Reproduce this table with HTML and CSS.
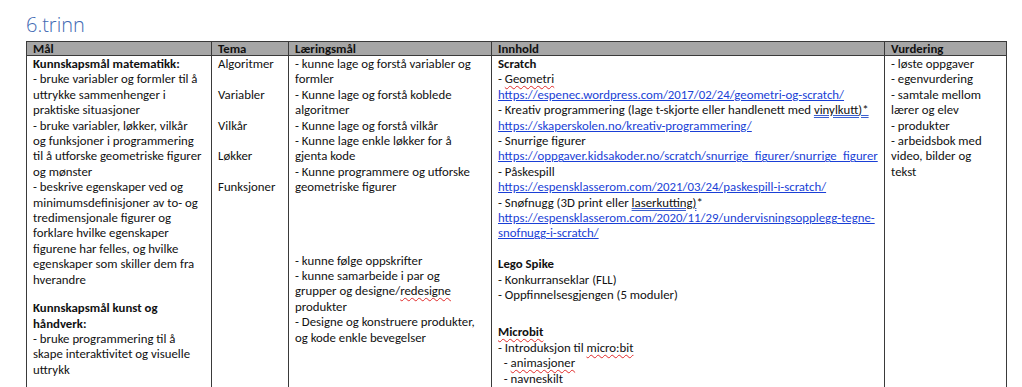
FILE: index.html
```html
<!DOCTYPE html>
<html lang="no">
<head>
<meta charset="utf-8">
<title>6.trinn</title>
<link rel="stylesheet" href="styles.css">
</head>
<body>
<div class="page">
  <h2 class="title">6.trinn</h2>
  <table class="plan">
    <colgroup>
      <col class="c-mal">
      <col class="c-tema">
      <col class="c-lar">
      <col class="c-inn">
      <col class="c-vur">
    </colgroup>
    <thead>
      <tr>
        <th>Mål</th>
        <th>Tema</th>
        <th>Læringsmål</th>
        <th>Innhold</th>
        <th>Vurdering</th>
      </tr>
    </thead>
    <tbody>
      <tr>
        <td>
          <p><b>Kunnskapsmål matematikk:</b><br>- bruke variabler og formler til å<br>uttrykke sammenhenger i<br>praktiske situasjoner<br>- bruke variabler, løkker, vilkår<br>og funksjoner i programmering<br>til å utforske geometriske figurer<br>og mønster<br>- beskrive egenskaper ved og<br>minimumsdefinisjoner av to- og<br>tredimensjonale figurer og<br>forklare hvilke egenskaper<br>figurene har felles, og hvilke<br>egenskaper som skiller dem fra<br>hverandre</p>
          <p class="gap gap-s"></p>
          <p><b>Kunnskapsmål kunst og<br>håndverk:</b><br>- bruke programmering til å<br>skape interaktivitet og visuelle<br>uttrykk</p>
        </td>
        <td>
          <p>Algoritmer</p>
          <p class="gap"></p>
          <p>Variabler</p>
          <p class="gap"></p>
          <p>Vilkår</p>
          <p class="gap"></p>
          <p>Løkker</p>
          <p class="gap"></p>
          <p>Funksjoner</p>
        </td>
        <td>
          <p>- kunne lage og forstå variabler og<br>formler<br>- Kunne lage og forstå koblede<br>algoritmer<br>- Kunne lage og forstå vilkår<br>- Kunne lage enkle løkker for å<br>gjenta kode<br>- Kunne programmere og utforske<br>geometriske figurer</p>
          <p class="gap gap-l"></p>
          <p>- kunne følge oppskrifter<br>- kunne samarbeide i par og<br>grupper og designe/<span class="spell">redesigne</span><br>produkter<br>- Designe og konstruere produkter,<br>og kode enkle bevegelser</p>
        </td>
        <td>
          <p><b>Scratch</b><br>- <span class="spell">Geometri</span><br><a href="#">https://espenec.wordpress.com/2017/02/24/geometri-og-scratch/</a><br>- Kreativ programmering (lage t-skjorte eller handlenett med <span class="gram">vinylkutt)*</span><br><a href="#">https://skaperskolen.no/kreativ-programmering/</a><br>- Snurrige figurer<br><a href="#">https://oppgaver.kidsakoder.no/scratch/snurrige_figurer/snurrige_figurer</a><br>- Påskespill<br><a href="#">https://espensklasserom.com/2021/03/24/paskespill-i-scratch/</a><br>- Snøfnugg (3D print eller <span class="gram">laserkutting)</span>*<br><a href="#">https://espensklasserom.com/2020/11/29/undervisningsopplegg-tegne-<br>snofnugg-i-scratch/</a></p>
          <p class="gap"></p>
          <p><b>Lego Spike</b><br>- Konkurranseklar (FLL)<br>- Oppfinnelsesgjengen (5 moduler)</p>
          <p class="gap gap-m"></p>
          <p><b class="spell">Microbit</b><br>- Introduksjon til <span class="spell">micro:bit</span><br>&nbsp; - <span class="spell">animasjoner</span><br>&nbsp; - navneskilt</p>
        </td>
        <td>
          <p>- løste oppgaver<br>- egenvurdering<br>- samtale mellom<br>lærer og elev<br>- produkter<br>- arbeidsbok med<br>video, bilder og<br>tekst</p>
        </td>
      </tr>
    </tbody>
  </table>
</div>
</body>
</html>
```

FILE: styles.css
```css
html, body {
  margin: 0;
  padding: 0;
  background: #ffffff;
  overflow: hidden;
}

body {
  font-family: Carlito, Lato, "Liberation Sans", sans-serif;
  color: #111111;
}

.page {
  padding-left: 26px;
  width: 979px;
}

.title {
  margin: 0;
  padding-top: 12px;
  height: 41px;
  box-sizing: border-box;
  font-family: "Open Sans", Lato, sans-serif;
  font-size: 20px;
  line-height: 26px;
  font-weight: 300;
  color: #4169b3;
}

.plan {
  width: 980px;
  border-collapse: collapse;
  table-layout: fixed;
  font-size: 12.8px;
}

.c-mal { width: 185px; }
.c-tema { width: 77px; }
.c-lar { width: 203px; }
.c-inn { width: 393px; }
.c-vur { width: 122px; }

.plan th,
.plan td {
  border: 1px solid #3a3a3a;
  padding: 0 6px;
  text-align: left;
  vertical-align: top;
  white-space: nowrap;
  overflow: hidden;
}

.plan th {
  background: #a6a6a6;
  font-weight: 700;
  line-height: 13px;
  padding-top: 0;
  padding-bottom: 0;
}

.plan td {
  line-height: 15.4px;
  height: 400px;
}

.plan p {
  margin: 0;
}

.gap { height: 15.4px; }
.gap-s { height: 13px; }
.gap-m { height: 22px; }
.gap-l { height: 58px; }

.plan a {
  color: #1a3fd6;
  text-decoration: underline;
}

.spell {
  text-decoration: underline wavy #e02a2a;
  text-decoration-thickness: 1px;
  text-underline-offset: 2px;
}

.gram {
  text-decoration: underline double #3b5fcf;
  text-decoration-thickness: 1px;
  text-underline-offset: 1px;
}
```
